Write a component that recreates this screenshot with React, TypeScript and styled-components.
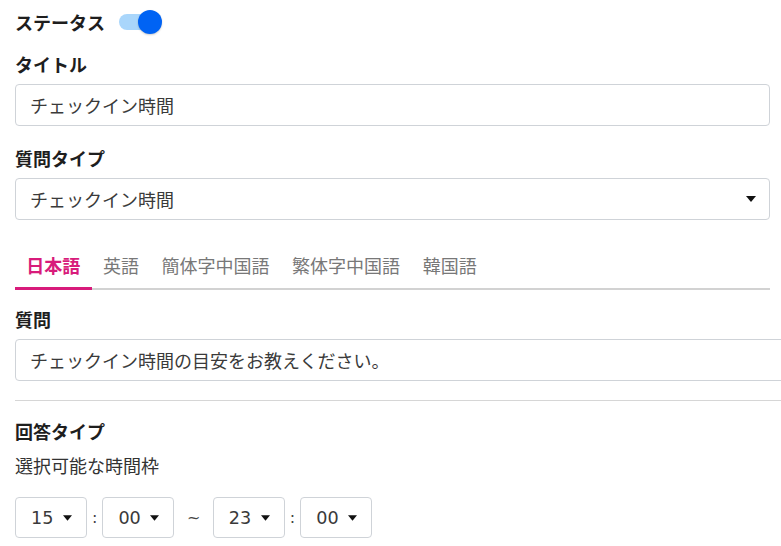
import React, { useState } from "react";
import styled, { createGlobalStyle } from "styled-components";

const GlobalStyle = createGlobalStyle`
  html, body {
    margin: 0;
    padding: 0;
    background: #fff;
    overflow: hidden;
  }
  body {
    font-family: "DejaVu Sans", "Noto Sans CJK JP", sans-serif;
    font-size: 17.6px;
    color: #222;
  }
`;

const Page = styled.div`
  padding: 9px 11.5px 0 15px;
`;

const StatusRow = styled.div`
  display: flex;
  align-items: center;
  gap: 14px;
  height: 26px;
`;

const Label = styled.div<{ $weight?: number }>`
  font-family: "Noto Sans CJK JP", sans-serif;
  font-size: 18px;
  font-weight: ${(p) => p.$weight ?? 700};
  line-height: 26px;
  color: ${(p) => (p.$weight === 400 ? "#333" : "#1e1e1e")};
`;

const Toggle = styled.button<{ $on: boolean }>`
  position: relative;
  width: 44px;
  height: 24px;
  padding: 0;
  border: none;
  background: none;
  cursor: pointer;
  &::before {
    content: "";
    position: absolute;
    left: 0;
    top: 4px;
    width: 32px;
    height: 16px;
    border-radius: 8px;
    background: ${(p) => (p.$on ? "#a9d6fb" : "#d0d0d0")};
  }
  &::after {
    content: "";
    position: absolute;
    top: 0;
    left: ${(p) => (p.$on ? "19px" : "0")};
    width: 24px;
    height: 24px;
    border-radius: 50%;
    background: ${(p) => (p.$on ? "#0063f4" : "#f5f5f5")};
    box-shadow: 0 1px 2px rgba(0, 0, 0, 0.2);
  }
`;

const Field = styled.div<{ $top: number }>`
  margin-top: ${(p) => p.$top}px;
  display: flex;
  flex-direction: column;
  gap: 7px;
`;

const Box = styled.div<{ $wide?: boolean }>`
  box-sizing: border-box;
  height: 42px;
  width: ${(p) => (p.$wide ? "calc(100% + 40px)" : "100%")};
  border: 1px solid #cfd3d8;
  border-radius: 4px;
  display: flex;
  align-items: center;
  justify-content: space-between;
  padding: 0 13px 0 14px;
  font-family: "Noto Sans CJK JP", sans-serif;
  font-size: 18px;
  color: #3a3a3a;
  line-height: 26px;
  white-space: nowrap;
`;

const TabBar = styled.div`
  margin-top: 22px;
  display: flex;
  border-bottom: 2px solid #d2d2d2;
`;

const Tab = styled.div<{ $active?: boolean }>`
  margin-bottom: -2px;
  padding: 10px 11.3px 9px;
  line-height: 26px;
  font-family: "Noto Sans CJK JP", sans-serif;
  font-size: 18px;
  font-weight: ${(p) => (p.$active ? 700 : 400)};
  color: ${(p) => (p.$active ? "#d81b7b" : "#787878")};
  border-bottom: 3px solid ${(p) => (p.$active ? "#d81b7b" : "transparent")};
  cursor: pointer;
`;

const Divider = styled.hr`
  margin: 19px -30px 0 0;
  border: none;
  border-top: 1px solid #d6d6d6;
`;

const TimeRow = styled.div`
  margin-top: 19px;
  display: flex;
  align-items: center;
`;

const TimeSelect = styled.div`
  box-sizing: border-box;
  width: 72px;
  height: 41px;
  border: 1px solid #cfd3d8;
  border-radius: 4px;
  display: flex;
  align-items: center;
  justify-content: space-between;
  padding: 0 14px 0 15px;
  color: #3a3a3a;
`;

const Sep = styled.span<{ $gap: number }>`
  padding: 0 ${(p) => p.$gap}px;
  color: #444;
  font-size: 16px;
`;

const Caret = ({ w = 10 }: { w?: number }) => (
  <svg width={w} height="6" viewBox="0 0 10 6">
    <path d="M0 0h10L5 6z" fill="#111" />
  </svg>
);

const tabs = ["日本語", "英語", "簡体字中国語", "繁体字中国語", "韓国語"];

export default function App() {
  const [on, setOn] = useState(true);
  const [tab, setTab] = useState(0);
  return (
    <Page>
      <GlobalStyle />
      <StatusRow>
        <Label>ステータス</Label>
        <Toggle $on={on} onClick={() => setOn(!on)} aria-label="status" />
      </StatusRow>

      <Field $top={16}>
        <Label>タイトル</Label>
        <Box>チェックイン時間</Box>
      </Field>

      <Field $top={19}>
        <Label>質問タイプ</Label>
        <Box>
          チェックイン時間
          <Caret />
        </Box>
      </Field>

      <TabBar>
        {tabs.map((t, i) => (
          <Tab key={t} $active={i === tab} onClick={() => setTab(i)}>
            {t}
          </Tab>
        ))}
      </TabBar>

      <Field $top={16}>
        <Label>質問</Label>
        <Box $wide>チェックイン時間の目安をお教えください。</Box>
      </Field>

      <Divider />

      <Field $top={17} style={{ gap: 8 }}>
        <Label>回答タイプ</Label>
        <Label $weight={400}>選択可能な時間枠</Label>
      </Field>

      <TimeRow>
        <TimeSelect>
          15
          <Caret w={9} />
        </TimeSelect>
        <Sep $gap={5}>:</Sep>
        <TimeSelect>
          00
          <Caret w={9} />
        </TimeSelect>
        <Sep $gap={12.5}>~</Sep>
        <TimeSelect>
          23
          <Caret w={9} />
        </TimeSelect>
        <Sep $gap={5}>:</Sep>
        <TimeSelect>
          00
          <Caret w={9} />
        </TimeSelect>
      </TimeRow>
    </Page>
  );
}
